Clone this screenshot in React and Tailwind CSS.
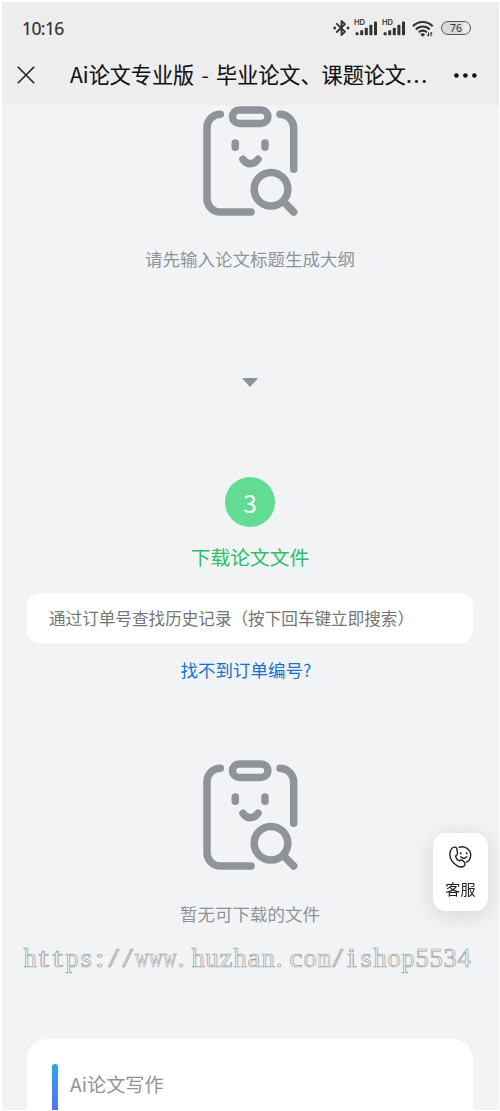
import React from "react";

const SITE_URL = "https://www.huzhan.com/ishop5534";

const BluetoothIcon = () => (
  <svg viewBox="0 0 17 18" className="w-[17px] h-[18px]" fill="none" stroke="#333" strokeWidth="1.8">
    <path d="M3.8 4.8 12 12.6 8.5 16V2L12 5.2 3.8 13" strokeLinejoin="round" strokeLinecap="round" />
    <circle cx="1.7" cy="9" r="1.4" fill="#333" stroke="none" />
    <circle cx="15" cy="9" r="1.4" fill="#333" stroke="none" />
  </svg>
);

const SignalIcon = () => (
  <div className="relative w-[24px] h-[16px]">
    <span className="absolute left-0 top-0 text-[7.5px] leading-[6px] font-semibold font-['Inter',sans-serif]">HD</span>
    <svg viewBox="0 0 24 16" className="w-[24px] h-[16px]" fill="#333">
      <rect x="1.6" y="12.3" width="3" height="3" rx="0.8" />
      <rect x="6.2" y="10.3" width="3" height="5" rx="0.8" />
      <rect x="10.8" y="7.8" width="3" height="7.5" rx="0.8" />
      <rect x="15.4" y="4.7" width="3" height="10.6" rx="0.8" />
      <rect x="20" y="1.6" width="3" height="13.7" rx="0.8" />
    </svg>
  </div>
);

const WifiIcon = () => (
  <svg viewBox="0 0 22 17" className="w-[22px] h-[17px]" fill="none" stroke="#333" strokeWidth="2.1">
    <path d="M.9 6.2a13.8 13.8 0 0 1 19.8 0" />
    <path d="M3.9 9.4a9.6 9.6 0 0 1 13.8 0" />
    <path d="M6.8 12.4a5.5 5.5 0 0 1 8 0" />
    <path d="M8.3 14.4a3.6 3.6 0 0 1 4.8 0l-2.4 2.3z" fill="#333" stroke="none" />
    <path d="M16.6 12.2v3.8M15.3 14.8l1.3 1.4M19 16.2v-3.9M20.2 13.6 19 12.3" strokeWidth="1.1" />
  </svg>
);

const ClipboardIcon = () => (
  <svg
    viewBox="0 0 95 110"
    className="w-[95px] h-[110px] shrink-0 overflow-visible"
    fill="none"
    stroke="#909399"
    strokeWidth="7.5"
    strokeLinecap="round"
  >
    <path d="M17.3 8.3A13.3 13.3 0 0 0 4 21.6V92.7A13.3 13.3 0 0 0 17.3 106H48" />
    <path d="M77 8.3A13.7 13.7 0 0 1 90.7 22V63.3" />
    <rect x="29.5" y="3.9" width="35.4" height="13.5" rx="6.75" />
    <path d="M32.3 36.9V41.2M62 36.9V41.2" />
    <path d="M40 53.3C44 59.2 50.8 59.2 55 53.3" />
    <circle cx="68" cy="83.3" r="16.8" />
    <path d="M81 96.2 90.7 106" />
  </svg>
);

// handset with a smiling face behind it
const ServiceIcon = () => (
  <svg
    viewBox="0 0 24 24"
    className="w-[24px] h-[24px] mr-[2px]"
    fill="none"
    stroke="#222"
    strokeWidth="1.4"
    strokeLinecap="round"
    strokeLinejoin="round"
  >
    <path d="M8.7 3.2C7.5 1.6 5.2 1.9 3.7 3.6C1 6.8 1.3 12 3.9 15.8C6.8 20 11.7 23.1 15.3 21.5C16.9 20.7 17.6 18.6 16.4 17.2L14.6 15.4C13.4 14.4 12.1 15.2 11.3 15.9C9.9 15.3 8 13 7.5 11.2C8.9 10.3 9.8 9.4 9.5 8Z" />
    <path d="M11.1 2.4C16.8 .3 22.7 4.4 22.7 9.9C22.7 13.3 20.8 15.9 18.5 17.2" />
    <path d="M12.7 8.1v.3M18.7 8.1v.3" strokeWidth="1.8" />
    <path d="M12.8 11.8C14.4 13.8 17.3 13.8 18.8 11.7" />
  </svg>
);

const StatusBar = () => (
  <div className="flex items-center h-[52px] pl-[20px] pr-7 text-[#333]">
    <span className="mt-[2px] text-[17.5px] leading-none tracking-[-0.6px] font-['Noto_Sans',sans-serif] [-webkit-text-stroke:0.2px_#333]">10:16</span>
    <div className="ml-auto flex items-center">
      <BluetoothIcon />
      <div className="ml-[4px]"><SignalIcon /></div>
      <div className="ml-[4px]"><SignalIcon /></div>
      <div className="ml-[6px]"><WifiIcon /></div>
      <div className="ml-[7px] w-[30px] h-[14px] rounded-full border-[1.3px] border-[#555] bg-gradient-to-r from-[#d9d9d9] from-75% to-[#ededed] to-75% flex items-center justify-center">
        <span className="text-[10.5px] leading-none font-['Noto_Sans',sans-serif]">76</span>
      </div>
    </div>
  </div>
);

const NavBar = () => (
  <div className="flex items-center h-[51px] pb-[9px] pl-[15px] pr-[22px] text-[#111]">
    <svg viewBox="0 0 18 18" className="w-[18px] h-[18px]" fill="none" stroke="#222" strokeWidth="1.6">
      <path d="M.8.8 17.2 17.2M17.2.8.8 17.2" />
    </svg>
    <h1 className="-mt-[3px] ml-[35px] w-[366px] whitespace-nowrap text-[21.1px] leading-[30px] [word-spacing:2.6px] [-webkit-text-stroke:0.12px_#111]">
      Ai论文专业版 - 毕业论文、课题论文<span className="tracking-[1.8px]">...</span>
    </h1>
    <svg viewBox="0 0 23 5" className="ml-auto w-[23px] h-[5px] shrink-0" fill="#111">
      <circle cx="2.4" cy="2.5" r="2.3" />
      <circle cx="11.4" cy="2.5" r="2.3" />
      <circle cx="20.4" cy="2.5" r="2.3" />
    </svg>
  </div>
);

// horizontal stretch that fits each glyph into its 14px cell
const glyphScale = (c) => {
  if (c === "w") return "scale-x-[0.72]";
  if (c === "m") return "scale-x-[0.66]";
  if ("ti/:".includes(c)) return "scale-x-[1.4]";
  if ("sazc".includes(c)) return "scale-x-[1.1]";
  if (c === ".") return "-translate-x-[3px]";
  return "scale-x-100";
};

const Watermark = () => (
  <div className="flex h-[30px] pl-[21px] whitespace-nowrap text-[26.5px] leading-[28px] text-[#f1f3f5] font-['Liberation_Serif',serif] [-webkit-text-stroke:0.7px_#a0a0a0]">
    <p>
      {SITE_URL.split("").map((c, i) => (
        <span key={i} className="inline-flex justify-center w-[14px]">
          <span className={glyphScale(c)}>{c}</span>
        </span>
      ))}
    </p>
  </div>
);

const App = () => {
  return (
    <div className="w-[500px] h-[1111px] overflow-hidden bg-white pt-[2px] pl-[2px] pr-px pb-px font-['Noto_Sans_CJK_SC',sans-serif]">
      <div className="flex flex-col h-full overflow-hidden bg-[#f1f3f5]">
        <header className="shrink-0 bg-[#ededed]">
          <StatusBar />
          <NavBar />
        </header>

        <section className="flex flex-col items-center pt-px pr-px">
          <ClipboardIcon />
          <p className="mt-[30px] text-[17.5px] leading-[26px] text-[#909399]">请先输入论文标题生成大纲</p>
          <svg viewBox="0 0 16 9" className="mt-[106px] w-[16px] h-[9px]" fill="#909399">
            <path d="M.4.8Q.4 0 1.2 0H14.8Q15.6 0 15.6.8L8.7 8.2Q8 8.9 7.3 8.2Z" />
          </svg>
        </section>

        <section className="flex flex-col items-center mt-[90px] pl-[25px] pr-[26px]">
          <div className="flex items-center justify-center w-[50px] h-[50px] rounded-full bg-[#62dc93] text-white text-[25px] leading-none">
            3
          </div>
          <h2 className="mt-[15px] text-[19.8px] leading-[30px] text-[#2cbe68]">下载论文文件</h2>
          <div className="mt-[21px] w-full h-[50px] rounded-[13px] bg-white">
            <input
              className="w-full h-full px-[22px] pb-px bg-transparent text-[16.6px] outline-none placeholder:text-[#757575]"
              placeholder="通过订单号查找历史记录（按下回车键立即搜索）"
            />
          </div>
          <a href="#order" className="mt-[14px] mr-[8px] text-[17.5px] leading-[26px] text-[#1673cf]">
            找不到订单编号?
          </a>
        </section>

        <section className="flex flex-col items-center mt-[77px] pr-px">
          <ClipboardIcon />
          <p className="mt-[31px] text-[17.5px] leading-[26px] text-[#909399]">暂无可下载的文件</p>
        </section>

        <div className="mt-[17px]">
          <Watermark />
        </div>

        <section className="mt-[65px] ml-[25px] mr-[26px] h-[90px] shrink-0 rounded-t-[20px] bg-white flex items-start pt-[25px] pl-[25px]">
          <div className="w-[6px] h-[60px] rounded-full bg-gradient-to-b from-[#2ba6ee] to-[#5560f0]" />
          <h3 className="ml-[12px] mt-[6px] text-[19.2px] leading-[28px] text-[#909399]">Ai论文写作</h3>
        </section>
      </div>

      <button className="fixed left-[433px] top-[833px] w-[55px] h-[78px] rounded-[13px] bg-white shadow-[0_4px_22px_rgba(0,0,0,0.13)] flex flex-col items-center pt-[12px]">
        <ServiceIcon />
        <span className="mt-[8px] text-[15.2px] leading-[22px] text-[#222]">客服</span>
      </button>
    </div>
  );
};

export default App;
